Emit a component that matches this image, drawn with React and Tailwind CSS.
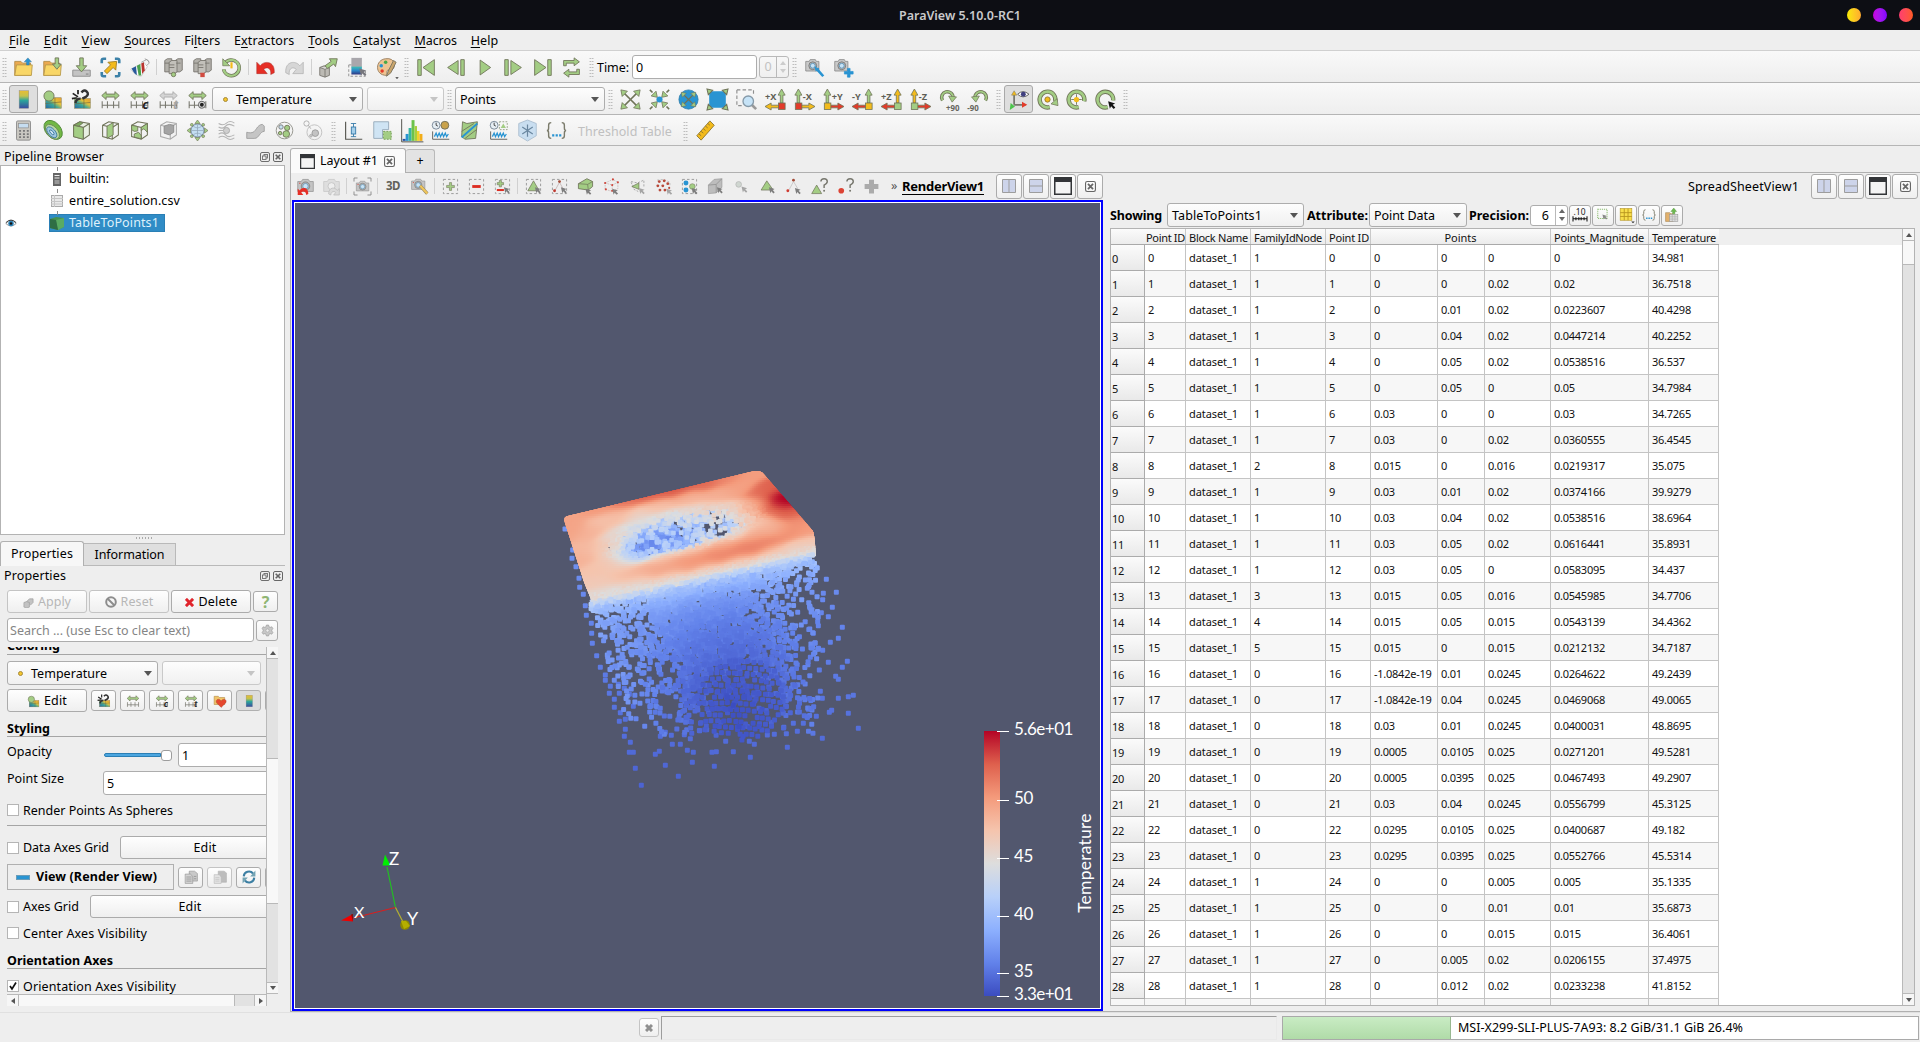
import React, { useLayoutEffect, useMemo, useRef } from "react";

/* Text fitted to a given width by letter spacing. */
function T({ w, className = "", children }) {
  const ref = useRef(null);
  useLayoutEffect(() => {
    const el = ref.current;
    if (!el || !w) return;
    el.style.letterSpacing = "0px";
    const natural = el.getBoundingClientRect().width;
    el.style.letterSpacing = (w - natural) / el.textContent.length + "px";
  }, [w]);
  return (
    <span ref={ref} className={"inline-block whitespace-pre flex-none " + className}>
      {children}
    </span>
  );
}

const G = "#a3cd84";
const GS = "#6f7358";
const B = "#2994d2";
const Y = "#f3bb1c";
const R = "#e23b2a";
const K = "#77776e";

function Svg({ s = 21, children }) {
  return (
    <svg width={s} height={s} viewBox="0 0 24 24" fill="none" className="block flex-none overflow-visible">
      {children}
    </svg>
  );
}

/* ---------- shared icon parts ---------- */
const MapSquare = ({ x = 5, y = 9, w = 16, h = 12 }) => (
  <g>
    <rect x={x} y={y} width={w} height={h} fill="url(#mapDiag)" stroke="#8b8050" strokeWidth=".6" />
    <path d={`M${x} ${y + h * 0.55}L${x + w} ${y + h * 0.4}M${x + w * 0.6} ${y}V${y + h}`} stroke="#6f6640" strokeWidth=".7" />
  </g>
);
const Range = ({ c = G, s = GS }) => (
  <g>
    <path d="M2 7.5L7 3v2.8h10V3l5 4.5-5 4.5V9.2H7V12z" fill={c} stroke={s} strokeWidth="1" />
    <path d="M2.500 14v8M8.500 14v8M15.500 14v8M21.500 14v8M2.500 18.500h19" stroke={K} strokeWidth="1.200" />
  </g>
);
const Cursor = ({ x = 14, y = 13, c = "#7d7d7d" }) => (
  <path d={`M${x} ${y}l8 2.500-2.800 1.500 3 3-1.800 1.800-3-3-1.400 2.800z`} fill={c} />
);
const Dash = ({ x = 2, y = 2, w = 20, h = 20, c = "#8f8f8f" }) => (
  <rect x={x} y={y} width={w} height={h} stroke={c} strokeWidth="1.200" strokeDasharray="3.500 3" />
);
const CubeFrame = ({ c = GS, f = "none" }) => (
  <path d="M3 6l7-4 11 2v13l-7 5-11-3zM3 6l11 2.500V22M14 8.500L21 4" stroke={c} fill={f} strokeWidth="1.200" />
);
const Camera = () => (
  <g>
    <path d="M2 5h4l1-2h6l1 2h3v11H2z" fill="#c9c9c9" stroke="#8d8d8d" />
    <circle cx="10" cy="10" r="4.500" fill="#b5b5b5" stroke="#777" />
    <circle cx="10" cy="10" r="2.800" fill="#c7e2f5" stroke="#5a94ba" />
  </g>
);
/* larger camera body used by the view toolbar */
const BigCamera = () => (
  <g>
    <path d="M1 5h5l2-3h8l2 3h5v14H1z" fill="#c4c4c4" stroke="#8f8f8f" />
    <circle cx="12" cy="11.500" r="6" fill="#b2b2b2" stroke="#777" />
    <circle cx="12" cy="11.500" r="3.800" fill="#c7e2f5" stroke="#5a94ba" />
    <circle cx="4" cy="7.500" r="1" fill="#d9534a" />
  </g>
);
const Servers = () => (
  <g fill="#b3b1ab" stroke="#77756e">
    <path d="M2 4l3-2h5v13l-3 2H2zM14 4l3-2h5v13l-3 2h-5z" />
    <path d="M7 6l3-2h6v13l-3 2H7z" fill="#c2c0ba" />
    <path d="M2 7h5M7 9h6M7 12h6M15 7h5" />
  </g>
);
const Plus = ({ cx, cy, r = 5, c = G, s = GS }) => (
  <path
    d={`M${cx - 1.5} ${cy - r}h3v${r - 1.5}h${r - 1.5}v3h-${r - 1.5}v${r - 1.5}h-3v-${r - 1.5}h-${r - 1.5}v-3h${r - 1.5}z`}
    fill={c}
    stroke={s}
    strokeWidth=".8"
  />
);
const Arrows4 = ({ tips = "out" }) =>
  [0, 90, 180, 270].map((a) => (
    <g key={a} transform={`rotate(${a} 12 12)`}>
      {tips === "out" ? (
        <path d="M12 12L5 5" stroke={GS} strokeWidth="1.800" />
      ) : (
        <path d="M1 1l3 3" stroke={GS} strokeWidth="1.800" />
      )}
      <path d={tips === "out" ? "M1 1l7.500 1.500-6 6z" : "M9.500 9.500L2.500 8 8 2.500z"} fill={G} stroke={GS} strokeWidth=".9" />
    </g>
  ));
const small = "font-['Noto_Sans'] font-bold";

const icons = {
  open: (<><path d="M2 5h7l2 2h9v14H2z" fill="#eba950" stroke="#b08a45" /><path d="M2 21l2-12h18l-1 12z" fill="#f8d667" stroke="#b7994a" /><path d="M17 1l4 4.500h-2.500V9h-3V5.500H13z" fill={B} stroke="#35769c" strokeWidth=".6" /></>),
  recent: (<><path d="M2 5h7l2 2h9v14H2z" fill="#eba950" stroke="#b08a45" /><path d="M2 21l2-12h18l-1 12z" fill="#f8d667" stroke="#b7994a" /><path d="M15 1h4v7h3l-5 6-5-6h3z" fill={G} stroke={GS} /></>),
  save: (<><path d="M2 15h20v7H2z" fill="#c3c3c3" stroke="#8b8b8b" /><path d="M10 1h4v9h4l-6 7-6-7h4z" fill={G} stroke={GS} /><path d="M17 19.500h3" stroke="#777" /></>),
  extract: (<><path d="M2 7V4q0-2 2-2h3M17 2h3q2 0 2 2v3M22 17v3q0 2-2 2h-3M7 22H4q-2 0-2-2v-3" stroke="#3c81a8" strokeWidth="3" /><path d="M5 16l7-7-3-3 10-1-1 10-3-3-7 7z" fill={Y} stroke="#9b7a23" /></>),
  flask: (<><path d="M17 6l4 5-7 11q-6 0-12-8z" fill="#fff" stroke="#c9c9c9" /><path d="M3 13l5-2.500 1 10q-3-1-6-7.500z" fill="#29599b" /><path d="M9 10l4-2 1 13h-3z" fill="#4aa04c" /><path d="M14 7.500l3-1.500 1 9-3 4.500z" fill="#b8332d" /><path d="M14 6l6-3q3 1 3 4l-3 3M18 2q4 1 5 4" stroke="#9b9b9b" /></>),
  connect: (<><Servers /><circle cx="12" cy="20" r="2.500" fill={G} stroke={GS} /></>),
  disconnect: (<><Servers /><rect x="9.500" y="18" width="5" height="5" fill="#d14b40" /></>),
  history: (<><path d="M4 8a9 9 0 1 1-1 6" stroke={GS} strokeWidth="4" /><path d="M4 8a9 9 0 1 1-1 6" stroke={G} strokeWidth="2.500" /><path d="M2 2v8h8z" fill={G} stroke={GS} strokeWidth=".8" /><path d="M12 6v7" stroke={Y} strokeWidth="2.500" /></>),
  undo: (<path d="M2 19V6l4 4c4-6 17-6 16 8l-4 2c1-8-5-9-8-6l4 5z" fill="#e62e25" stroke="#a82a25" strokeWidth=".6" />),
  redo: (<path d="M22 19V6l-4 4C14 4 1 4 2 18l4 2c-1-8 5-9 8-6l-4 5z" fill="#d6d6d6" stroke="#adadad" strokeWidth=".8" />),
  apply: (<><path d="M2 12l5-2 6 2v9l-5 2-6-2zM8 14v9M2 12l6 2 5-2" fill="#bcbab4" stroke="#77756e" /><path d="M8 10l7-5-2-3 9 0-2 9-2-3-7 5z" fill={G} stroke={GS} /></>),
  selcolor: (<><rect x="5" y="1" width="12" height="11" fill="#a9a7ac" /><rect x="5" y="11" width="12" height="9" fill="url(#mapV2)" /><path d="M2 9v13h19v-6M2 9h3" stroke="#888" strokeDasharray="3 2" /><Cursor x={14} y={13} c="#77777d" /></>),
  palette: (<><path d="M11 2c13-2 12 14 5 13-5-1-3 3-4 6C-2 21-1 3 11 2z" fill="#eec492" stroke="#93795b" /><circle cx="11" cy="6" r="2" fill="#48a949" /><circle cx="6" cy="10" r="2" fill={B} /><circle cx="7" cy="16" r="2" fill={R} /><path d="M20 4l-6 12-2 6 5-4 6-12z" fill="#c9a56c" stroke="#77715f" /><path d="M22 23h4l-2 2z" fill="#333" /></>),
  first: (<path d="M2 3h4v18H2zM21 3v18L8 12z" fill={G} stroke={GS} />),
  prev: (<path d="M18 3h4v18h-4zM15 4v16L3 12z" fill={G} stroke={GS} />),
  play: (<path d="M7 3.500v17L19 12z" fill={G} stroke={GS} />),
  next: (<path d="M2 3h4v18H2zM9 4v16l12-8z" fill={G} stroke={GS} />),
  last: (<path d="M18 3h4v18h-4zM3 3v18l13-9z" fill={G} stroke={GS} />),
  loop: (<path d="M3 10V4h12V1l6 4.500-6 4.500V7H6v3zM21 14v6H9v3l-6-4.500L9 14v3h9v-3z" fill={G} stroke={GS} />),
  camLink: (<><Camera /><path d="M14 13l8 9" stroke={B} strokeWidth="3" /><path d="M13 11l1 4 3-2" stroke={B} strokeWidth="2" /></>),
  camPlus: (<><Camera /><Plus cx={18} cy={18} r={5} c={B} s={B} /></>),
  bar: (<rect x="7" y="2" width="11" height="20" fill="url(#mapV)" stroke="#888" strokeWidth=".5" />),
  editmap: (<><MapSquare x={4} y={10} w={18} h={12} /><circle cx="8" cy="8" r="5.800" fill={G} stroke={GS} /></>),
  sepmap: (<><MapSquare x={4} y={11} w={18} h={11} /><path d="M8 1v5M2 5l6 4M1 11l6-1" stroke="#222" strokeWidth="2" /><path d="M12 4q3-4 6-1t-1 6l-4 2M5 16q1-5 6-5" stroke="#333" strokeWidth="2.800" /></>),
  range: (<Range />),
  rangeC: (<><Range /><text x="15" y="22.500" className={small} fontSize="14" fontStyle="italic" fill="#222">c</text></>),
  rangeT: (<><Range c="#d4d4d4" s="#aaa" /><text x="17" y="22.500" className={small} fontSize="14" fontStyle="italic" fill="#a5a5a5">t</text></>),
  rangeT2: (<><Range /><text x="17" y="22.500" className={small} fontSize="14" fontStyle="italic" fill="#333">t</text></>),
  rangeV: (<><Range /><circle cx="17" cy="18" r="4" fill="#ddd" stroke="#555" /><circle cx="17" cy="18" r="2.200" fill="#222" /></>),
  calc: (<><rect x="4" y="1" width="16" height="22" rx="1.500" fill="#c9c7c1" stroke="#888" /><rect x="6.500" y="4" width="11" height="5" fill="#c6ddf0" stroke="#888" strokeWidth=".7" /><path d="M7 12.500h11M7 16h11M7 19.500h11" stroke="#777" strokeWidth="2" strokeDasharray="2.200 2.200" /></>),
  contour: (<g transform="rotate(48 12 12)"><ellipse cx="12" cy="11" rx="12.500" ry="8.500" fill="#72b845" stroke="#4d8634" /><ellipse cx="13" cy="13" rx="10" ry="6" fill="#b9d7a2" stroke="#6a8a55" /><ellipse cx="13" cy="14" rx="7.500" ry="4" fill="#9fc6e0" stroke="#417b9f" /><ellipse cx="13" cy="14" rx="3.500" ry="1.500" fill="#d1e5f3" stroke="#37789f" /></g>),
  clip: (<><CubeFrame f="#e8efe2" /><path d="M3 6l11 2.500V22L3 19z" fill={G} stroke={GS} /><path d="M3 6l7-4 4 1-5 4z" fill="#7faa60" stroke={GS} /></>),
  slice: (<><CubeFrame /><path d="M8 7l7-4v14l-7 4z" fill={G} stroke={GS} /></>),
  threshold: (<><CubeFrame /><path d="M3 6l7 1.500v5L6 13l-3-2zM14 8.500L21 4v10l-4-4-3 2zM6 16l5-2 3 4v3.500l-8-2z" fill={G} stroke={GS} /></>),
  subset: (<><CubeFrame c="#aaa" /><path d="M7 7l6-2 5 1v8l-5 3-6-2z" fill="#a4a4a4" stroke="#888" /></>),
  glyph: (<><circle cx="12" cy="12" r="7.500" fill="#c4def1" stroke="#698199" /><path d="M5 12h14M12 5v14M7 7q5 4 10 0M7 17q5-4 10 0" stroke="#8fa5b7" strokeWidth=".8" /><g fill={G} stroke={GS} strokeWidth=".7"><path d="M12 0l3 4H9zM12 24l3-4H9zM0 12l4-3v6zM24 12l-4-3v6z" /><circle cx="5.500" cy="5.500" r="1.600" /><circle cx="18.500" cy="5.500" r="1.600" /><circle cx="5.500" cy="18.500" r="1.600" /><circle cx="18.500" cy="18.500" r="1.600" /></g></>),
  stream: (<><path d="M3 4q5 3 9-.500t9 0M3 8q5 3 8-1t10 0M3 20q5-3 9 .500t9 0M3 16q5-3 8 1t10 0M3 12h5" stroke="#b4b4b4" strokeWidth="1.200" /><circle cx="12" cy="12" r="3.500" fill="#cfcfcf" stroke="#a5a5a5" /></>),
  warp: (<path d="M2 14c7 2 9-1 11-4s4-5 7-5l2 2v6c-5 0-6 8-11 8H2z" fill="#c5c5c5" stroke="#9d9d9d" />),
  group: (<><circle cx="12" cy="12" r="9.500" stroke="#8c8c84" /><circle cx="8" cy="8" r="2.500" fill="#c7e0ef" stroke="#777" /><circle cx="15" cy="9" r="3" fill={G} stroke={GS} /><circle cx="14" cy="16" r="3.800" fill={G} stroke={GS} /><circle cx="7" cy="15" r="2" fill={G} stroke={GS} /></>),
  extractBlock: (<><circle cx="13" cy="14" r="8.500" stroke="#bdbdbd" /><circle cx="14" cy="15" r="3.800" fill="#c3c3c3" stroke="#999" /><circle cx="4" cy="4" r="3" stroke="#aaa" /><circle cx="9" cy="18" r="1.500" fill="#ccc" stroke="#aaa" /><path d="M6 6l3 4" stroke="#aaa" /></>),
  boxplot: (<><path d="M3 2v20h19" stroke="#55554f" strokeWidth="1.300" /><path d="M9 4h6M12 4v4M12 15v4M9 19h6" stroke="#3479a8" /><rect x="9.500" y="8" width="5" height="8" fill="#a6cfea" stroke="#3479a8" /></>),
  plotSel: (<><path d="M2 2h17v9h-7v10H2z" fill="#cfe4f4" stroke="#93a7b7" /><rect x="13" y="13" width="9" height="9" fill={G} stroke="#6f9a50" strokeDasharray="2 1.500" /></>),
  hist: (<g transform="translate(-1.500 -1) scale(1.130)"><path d="M2 0v23h22" stroke="#55554f" /><path d="M3 20h3v2H3z" fill="#284fa2" /><path d="M6 15h3v7H6z" fill={B} /><path d="M9 9h3v13H9z" fill="#37b5a3" /><path d="M12 1h3v21h-3z" fill="#6cc24a" /><path d="M15 7h2.500v15H15z" fill="#a7cf3e" /><path d="M17.500 12H20v10h-2.500z" fill="#f2d22c" /><path d="M20 15h3v7h-3z" fill="#f2ad19" /></g>),
  plotTime: (<><circle cx="7" cy="6" r="4.500" fill="#e6eef4" stroke="#708090" /><path d="M7 3v3l2 1" stroke="#333" /><circle cx="17" cy="6" r="4.500" fill="#c9a24b" stroke="#6b6b5b" /><path d="M3 13v9h19" stroke="#55554f" /><path d="M5 19l2-4 1.500 4 2-4 1.500 4 2-4 1.500 4 2-4 1.500 4 2-3" stroke={B} strokeWidth="1.400" /></>),
  plotLine: (<><path d="M4 2l5 2 12-2-2 19-12 1-4-3z" fill={G} stroke={GS} /><path d="M3 20L21 4" stroke={B} strokeWidth="2" /><path d="M3 13l14-9M7 21l13-10" stroke={GS} /></>),
  plotTime2: (<><circle cx="7" cy="6" r="4.500" fill="#e6eef4" stroke="#708090" /><path d="M7 3v3l2 1" stroke="#333" /><rect x="13" y="2" width="9" height="9" stroke="#8f9a80" strokeDasharray="2 1.500" /><path d="M17.500 4l3 5h-6z" fill={G} /><path d="M3 13v9h19" stroke="#55554f" /><path d="M5 19l2-4 1.500 4 2-4 1.500 4 2-4 1.500 4 2-4 1.500 4 2-3" stroke={B} strokeWidth="1.400" /></>),
  probe: (<><path d="M12 0l10 4v14l-10 6L2 18V4z" fill="#c9def0" stroke="#a9bdcf" /><path d="M12 5v14M6 8l12 8M18 8L6 16" stroke="#6a87a0" strokeWidth="1.400" /></>),
  braces: (<><path d="M6 3q-3 0-3 3v3q0 3-2 3 2 0 2 3v3q0 3 3 3M18 3q3 0 3 3v3q0 3 2 3-2 0-2 3v3q0 3-3 3" stroke="#7b7b6b" strokeWidth="1.600" /><path d="M7 17.500h11" stroke={B} strokeWidth="2.500" strokeDasharray="2.500 1.500" /></>),
  ruler: (<><path d="M17 1l5 5L7 23l-5-5z" fill={Y} stroke="#8a7430" /><path d="M14.500 4l2.500 2M12 7l2.500 2M9.500 10l2.500 2M7 13L9.500 15M4.500 16L7 18" stroke="#8a7430" /></>),
  reset: (<Arrows4 />),
  zoomData: (<><Arrows4 tips="in" /><circle cx="12" cy="12" r="3.500" fill={B} /></>),
  resetClose: (<><circle cx="12" cy="12" r="11" fill={B} stroke="#2b78a5" strokeWidth=".8" /><g transform="translate(3 3) scale(.75)"><Arrows4 /></g></>),
  zoomClose: (<><rect x="2.500" y="2.500" width="19" height="19" rx="3" fill={B} /><path d="M0 0l6.500 1.500-5 5zM24 0l-6.500 1.500 5 5zM0 24l6.500-1.500-5-5zM24 24l-6.500-1.500 5-5z" fill={G} stroke={GS} strokeWidth="1.200" /></>),
  zoomBox: (<><path d="M1 1h19v7M1 1v18h6" stroke="#8f8f8f" strokeWidth="1.300" strokeDasharray="4 2.500" /><path d="M18 18l5 5" stroke="#999" strokeWidth="3" /><circle cx="14" cy="14" r="6" fill="#c6e3f7" stroke="#8599a8" strokeWidth="1.500" /></>),
  rotP: (<><path d="M4 13a6.500 6.500 0 1 1 12-3" stroke={GS} strokeWidth="4" /><path d="M4 13a6.500 6.500 0 1 1 12-3" stroke={G} strokeWidth="2" /><path d="M11 8l9 1-5 6z" fill={G} stroke={GS} strokeWidth=".8" /><text x="8" y="25" className={small} fontSize="9" fill="#66665e">+90</text></>),
  rotM: (<><path d="M20 13a6.500 6.500 0 1 0-12-3" stroke={GS} strokeWidth="4" /><path d="M20 13a6.500 6.500 0 1 0-12-3" stroke={G} strokeWidth="2" /><path d="M13 8l-9 1 5 6z" fill={G} stroke={GS} strokeWidth=".8" /><text x="-1" y="25" className={small} fontSize="9" fill="#66665e">-90</text></>),
  showAxes: (<><path d="M7 18V5M7 18h13" stroke={K} strokeWidth="2" /><path d="M7 2l3 5H4z" fill={Y} stroke={K} strokeWidth=".6" /><path d="M22 18l-6-3.500v7z" fill={R} /><path d="M2 24l1-8 5 4z" fill="#4bc44b" /><path d="M11 6q6-6 13 0-7 6-13 0z" fill="#fff" stroke="#555" /><circle cx="17.500" cy="6" r="2.800" fill="#3f3f7f" /></>),
  cor1: (<><path d="M14.500 20.700A9 9 0 1 1 20.800 14" stroke={GS} strokeWidth="5" /><path d="M14.500 20.700A9 9 0 1 1 20.800 14" stroke={G} strokeWidth="3" /><path d="M16 17l7-6 1 8z" fill={G} stroke={GS} strokeWidth=".8" /><circle cx="12" cy="12" r="3" fill={Y} stroke="#93752a" /></>),
  cor2: (<><path d="M14.500 20.700A9 9 0 1 1 20.800 14" stroke={GS} strokeWidth="5" /><path d="M14.500 20.700A9 9 0 1 1 20.800 14" stroke={G} strokeWidth="3" /><path d="M12 6v12M6 12h12" stroke={GS} /><circle cx="12" cy="12" r="3" fill={Y} /></>),
  cor3: (<><path d="M14.500 20.700A9 9 0 1 1 20.800 13" stroke={GS} strokeWidth="5" /><path d="M14.500 20.700A9 9 0 1 1 20.800 13" stroke={G} strokeWidth="3" /><Cursor x={15} y={14} c="#111" /></>),
  camUndo: (<><BigCamera /><path d="M1 24v-9l3 2.500c3-5 12-5 12 5l-3 1.500c0-5-5-6-7-3.500L9 24z" fill="#e62e25" /></>),
  camRedo: (<g opacity=".6"><path d="M1 5h5l2-3h8l2 3h5v14H1z" fill="#d5d5d5" stroke="#a9a9a9" /><circle cx="12" cy="11.500" r="5" fill="#eee" stroke="#999" /><path d="M23 24v-9l-3 2.500c-3-5-12-5-12 5l3 1.500c0-5 5-6 7-3.500L15 24z" fill="#d0d0d0" stroke="#999" /></g>),
  capture: (<><path d="M0 5V0h5M19 0h5v5M24 19v5h-5M5 24H0v-5" stroke="#8a8a8a" strokeWidth="1.300" /><g transform="translate(2.500 3) scale(.8)"><BigCamera /></g></>),
  adjust: (<><g transform="scale(.85)"><BigCamera /></g><path d="M13 11l10 11" stroke="#92825c" strokeWidth="4.500" /><path d="M13 11l10 11" stroke="#efc65b" strokeWidth="3" /></>),
  selAdd: (<><Dash /><Plus cx={12} cy={12} r={5.500} /></>),
  selSub: (<><Dash /><rect x="6" y="10" width="12" height="4" fill="#dd2d22" /></>),
  selTog: (<><Dash c="#9a9a9a" /><Plus cx={9} cy={8} r={4.500} /><path d="M4 17h10" stroke="#dd2d22" strokeWidth="2.800" /><Cursor /></>),
  selCells: (<><Dash /><path d="M12 4l8 14H4z" fill={G} stroke={GS} /><Cursor /></>),
  selPts: (<><Dash /><path d="M12 6l6 11M12 6L6 17" stroke="#b9a9a9" /><circle cx="12" cy="5" r="2" fill="#a34a35" /><circle cx="5" cy="18" r="2" fill="#c03a30" /><Cursor /></>),
  frCells: (<><path d="M2 8l12-7 8 4v7l-6 5-14-2z" fill={G} stroke={GS} strokeWidth="1.200" /><path d="M2 8l13 1 7-4M15 9l1 8" stroke={GS} /><Cursor x={12} y={15} /></>),
  frPts: (<><path d="M3 7l11-5 7 4v9l-8 4-10-3zM3 7l10 3 8-4M13 10v9" stroke="#b9a9a9" strokeDasharray="2 1.500" /><g fill="#d0473c"><circle cx="3" cy="7" r="1.500" /><circle cx="14" cy="2" r="1.500" /><circle cx="21" cy="6" r="1.500" /><circle cx="13" cy="10" r="1.500" /><circle cx="13" cy="18" r="1.500" /><circle cx="4" cy="16" r="1.500" /></g><Cursor x={13} y={15} /></>),
  polyCells: (<><path d="M3 5l9 2 9-4 0 9M3 6l4 10 6 3" stroke="#8f8f8f" strokeDasharray="3 2" /><path d="M14 7v9L4 12z" fill={G} stroke={GS} /><Cursor x={14} y={14} c="#a5a5a5" /></>),
  polyPts: (<><path d="M3 3l9-1 9 4v6" stroke="#aaa" strokeDasharray="3 2" /><g fill="#b8493a"><circle cx="6" cy="5" r="2" /><circle cx="13" cy="4" r="2" /><circle cx="18" cy="8" r="2" /><circle cx="4" cy="11" r="2" /><circle cx="11" cy="11" r="2" /><circle cx="7" cy="17" r="2" /><circle cx="14" cy="17" r="2" /><circle cx="20" cy="14" r="1.500" /></g><Cursor x={16} y={15} c="#a5a5a5" /></>),
  blocks: (<><Dash /><circle cx="7" cy="7" r="3.500" fill={B} /><circle cx="7" cy="17" r="3.500" fill={B} /><circle cx="16" cy="12" r="4" fill={G} stroke={GS} strokeWidth=".7" /><Cursor x={15} y={14} /></>),
  blockF: (<><path d="M2 10l8-8 11-1v12l-8 8-11 1z" fill="#bdbdbd" stroke="#999" /><path d="M2 10l11-1 8-8M13 9v12" stroke="#8c8c8c" /><Cursor /></>),
  hoverP: (<><circle cx="8" cy="9" r="4" fill="#cfd6d0" stroke="#b5b5b5" /><Cursor x={12} y={12} c="#a5a5a5" /></>),
  hoverC: (<><path d="M11 4l9 13H3z" fill={G} stroke={GS} /><Cursor /></>),
  hoverT: (<><path d="M12 5L5 18M12 5l6 10" stroke="#bbb" /><circle cx="12" cy="3" r="2" fill="#a34a35" /><circle cx="4" cy="18" r="2" fill="#d03a30" /><Cursor x={14} y={14} /></>),
  askC: (<><path d="M8 10l7 12H1z" fill={G} stroke={GS} /><path d="M14 5q0-4 4.500-4t4.500 4q0 3-4.500 5v4" stroke={K} strokeWidth="2" /><circle cx="18.500" cy="18" r="1.400" fill={K} /></>),
  askP: (<><circle cx="6" cy="18" r="4" fill="#dc4334" /><path d="M14 5q0-4 4.500-4t4.500 4q0 3-4.500 5v4" stroke={K} strokeWidth="2" /><circle cx="18.500" cy="18" r="1.400" fill={K} /></>),
  plusGrey: (<path d="M8 1h8v7h7v8h-7v7H8v-7H1V8h7z" fill="#ababab" />),
  fav: (<><path d="M2 4h7l2 2h9v12H2z" fill="#f1c469" stroke="#b08a45" /><path d="M14 23l-8-8q-2-5 3-6 3.500 0 5 3 1.500-3 5-3 5 1 3 6z" fill="#e5482f" stroke="#9b3a2b" strokeWidth=".6" /></>),
  gear: (<><path d="M10 2h4l.600 3 2.400 1.200 3-1 2 3.500-2.200 2.300v2l2.200 2.300-2 3.500-3-1-2.400 1.200-.600 3h-4l-.600-3L7 17.800l-3 1-2-3.500L4.200 13v-2L2 8.700l2-3.500 3 1 2.400-1.200z" fill="#c7c7c7" stroke="#9d9d9d" strokeWidth="1.300" /><circle cx="12" cy="12" r="3" fill="#eee" stroke="#9d9d9d" /></>),
  copy: (<><path d="M9 2h9l5 4v13H9z" fill="#c9c9c9" stroke="#8d8d8d" /><path d="M2 7h9l4 4v12H2z" fill="#d3d3d3" stroke="#8d8d8d" /><path d="M4 12h9M4 15.500h9M4 19h9M17 11h4M17 15h4" stroke="#8f8f8f" strokeWidth="1.300" /></>),
  paste: (<><path d="M9 2h10l4 3v16H9z" fill="#bdbdbd" stroke="#b0b0b0" /><path d="M2 8h9l3 4v11H2z" fill="#e3e3e3" stroke="#b5b5b5" /><path d="M4 13h7M4 16h7M4 19h7" stroke="#bbb" /></>),
  refresh: (<><path d="M3 11A9 9 0 0 1 19 6M21 13A9 9 0 0 1 5 18" stroke="#3c7fa3" strokeWidth="3.500" /><path d="M23 1v10h-9zM1 23V13h9z" fill="#74a4b4" /></>),
  prec: (<><text x="1" y="12" className="font-['Noto_Sans']" fontSize="14.500" fill="#222">.10</text><path d="M0 14v9M24 14v9M0 18.500h24M5 16v5M10 16v5M14 16v5M19 16v5" stroke="#111" strokeWidth="1.800" /></>),
  selOnly: (<><rect x="3" y="2" width="16" height="16" stroke="#8cbc70" strokeWidth="1.800" strokeDasharray="2 1.500" /><Cursor x={11} y={11} c="#888" /></>),
  gridY: (<><rect x="2" y="1" width="20" height="20" fill="#f8de4b" stroke="#b5941f" /><path d="M9 1v20M15.500 1v20M2 8h20M2 14.500h20" stroke="#b5941f" strokeWidth="1.500" /><path d="M21 23h6l-3 3z" fill="#333" /></>),
  exportS: (<><path d="M1 8h7l2 2h4v13H1z" fill="#e3b16d" stroke="#a7834f" /><rect x="8" y="11" width="14" height="12" fill="#ddd" stroke="#999" /><path d="M8 15h14M8 19h14M12.500 11v12M17 11v12" stroke="#aaa" /><path d="M13 10V6h-3l5-6 5 6h-3v4z" fill="#6cba4f" stroke="#4d8838" strokeWidth=".6" /></>),
};
const Ic = ({ n, s }) => <Svg s={s}>{icons[n]}</Svg>;

/* Axis-direction icon: an up arrow and a side arrow leaving one cube. */
function AxisIcon({ label, left, up, side, cube }) {
  const x = left ? 19 : 5;
  return (
    <Svg>
      <path d={`M${x - 1.5} 16V7h-2.500l4-7 4 7h-2.500v9z`} fill={up} stroke={GS} strokeWidth=".9" />
      <path
        d={left ? "M16 18.500H7V16l-7 4 7 4v-2.500h9z" : "M8 18.500h9V16l7 4-7 4v-2.500H8z"}
        fill={side}
        stroke={GS}
        strokeWidth=".9"
      />
      <rect x={x - 3.5} y="16" width="7.500" height="7.500" fill={cube} stroke={GS} strokeWidth=".9" />
      <text x={left ? 0 : 10} y="12" className={small} fontSize="10.500" fill="#5e5e55">{label}</text>
    </Svg>
  );
}

const Handle = ({ w = "w-[11px]" }) => (
  <div className={"flex h-full flex-none items-center justify-center " + w}>
    <div className="h-[20px] w-[5px] bg-[radial-gradient(circle,#b0b0b0_0.7px,transparent_0.9px)] bg-[size:2.500px_3px]" />
  </div>
);
const Sep = () => (
  <div className="flex h-full w-[5px] flex-none items-center justify-center">
    <div className="h-[16px] w-px bg-[#d0d0d0]" />
  </div>
);
const Cell = ({ on, children }) => (
  <div
    className={
      "flex w-[29px] flex-none items-center justify-center " +
      (on ? "h-[28px] rounded-[3px] border border-[#a9a9a9] bg-[#dedede]" : "h-full")
    }
  >
    {children}
  </div>
);
const Cells = ({ list }) =>
  list.map((n, i) => (n === "|" ? <Sep key={i} /> : <Cell key={i}><Ic n={n} /></Cell>));

const Caret = ({ off }) => (
  <span className={"h-0 w-0 border-x-[4px] border-t-[5px] border-x-transparent " + (off ? "border-t-[#c5c5c5]" : "border-t-[#555]")} />
);
const Combo = ({ className, off, children }) => (
  <div
    className={
      "flex h-[24px] flex-none items-center justify-between rounded-[3px] border bg-gradient-to-b from-[#fdfdfd] to-[#f0f0f0] pr-[5px] " +
      (off ? "border-[#c9c9c9] " : "border-[#adadad] ") + className
    }
  >
    <div className="flex items-center pt-px">{children}</div>
    <Caret off={off} />
  </div>
);
const Btn = ({ className = "", grow, off, on, children }) => (
  <div
    className={
      "flex items-center justify-center rounded-[3px] border " + (grow ? "flex-1 " : "flex-none ") +
      (on ? "border-[#b0b0b0] bg-[#dcdcdc] " : "bg-gradient-to-b from-[#fefefe] to-[#efefef] ") +
      (off ? "border-[#c4c4c4] text-[#b7b7b7] " : "border-[#ababab] ") + className
    }
  >
    {children}
  </div>
);
const Dot = () => <span className="mr-[8px] h-[5px] w-[5px] rounded-full border border-[#a58a3b] bg-[#f5c52c]" />;

const FloatBtns = () => (
  <div className="flex gap-[3px] pr-[5px]">
    <svg width="10" height="10" viewBox="0 0 10 10" fill="none" stroke="#6e6e6e">
      <rect x=".5" y=".5" width="9" height="9" rx="1.500" />
      <rect x="4" y="2.500" width="3.500" height="3.500" strokeWidth=".9" />
      <rect x="2.500" y="4" width="3.500" height="3.500" fill="#eee" strokeWidth=".9" />
    </svg>
    <CloseBox />
  </div>
);
const CloseBox = ({ s = 10 }) => (
  <svg width={s} height={s} viewBox="0 0 10 10" fill="none" stroke="#666">
    <rect x=".5" y=".5" width="9" height="9" rx="1.500" />
    <path d="M2.700 2.700l4.600 4.600M7.300 2.700L2.700 7.300" strokeWidth="1.600" />
  </svg>
);

/* ---------- menu and toolbars ---------- */
const menus = [
  ["", "F", "ile", 21], ["", "E", "dit", 24], ["", "V", "iew", 29], ["", "S", "ources", 46], ["Fi", "l", "ters", 36],
  ["E", "x", "tractors", 60.5], ["", "T", "ools", 31], ["", "C", "atalyst", 47.5], ["", "M", "acros", 42.5], ["", "H", "elp", 27.5],
];

function Toolbars() {
  const bar = "flex flex-none items-center border-b border-[#b5b5b5] bg-gradient-to-b from-[#f9f9f9] to-[#eeeeee] pt-px ";
  return (
    <>
      <div className="flex h-[21px] flex-none items-center gap-[13.800px] border-b border-[#d0d0d0] pl-[9px] pt-px">
        {menus.map(([a, u, b, w]) => (
          <T key={u} w={w}>{a}<span className="underline decoration-1 underline-offset-2">{u}</span>{b}</T>
        ))}
      </div>
      <div className={bar + "h-[32px]"}>
        <Handle w="w-[9px]" />
        <Cells list={["open", "recent", "save", "extract", "flask", "|", "connect", "disconnect", "history", "|", "undo", "redo", "|", "apply", "selcolor", "palette"]} />
        <Handle />
        <Cells list={["first", "prev", "play", "next", "last", "loop"]} />
        <Handle />
        <T w={32} className="pt-px">Time:</T>
        <div className="ml-[3px] flex h-[24px] w-[125px] items-center rounded-[3px] border border-[#adadad] bg-white pl-[3px] pt-px">0</div>
        <div className="ml-[2px] flex h-[22px] w-[30px] items-center rounded-[3px] border border-[#b9b9b9] text-[#c2c2c2]">
          <span className="flex h-full w-[17px] items-center justify-center border-r border-[#b9b9b9]">0</span>
          <Spin off />
        </div>
        <Handle />
        <Cells list={["camLink", "camPlus"]} />
      </div>
      <div className={bar + "h-[32px]"}>
        <Handle w="w-[9px]" />
        <Cell on><Ic n="bar" /></Cell>
        <Cells list={["editmap", "sepmap", "range", "rangeC", "rangeT", "rangeV"]} />
        <Combo className="w-[151px] pl-[10px]"><Dot /><T w={76}>Temperature</T></Combo>
        <Combo off className="ml-[4px] w-[77px]" />
        <Handle />
        <Combo className="w-[150px] pl-[4px]"><T w={36}>Points</T></Combo>
        <Handle />
        <Cells list={["reset", "zoomData", "resetClose", "zoomClose", "zoomBox"]} />
        <Cell><AxisIcon label="+X" left up={G} side={Y} cube={R} /></Cell>
        <Cell><AxisIcon label="-X" up={G} side={Y} cube={R} /></Cell>
        <Cell><AxisIcon label="+Y" up={G} side={R} cube={Y} /></Cell>
        <Cell><AxisIcon label="-Y" left up={G} side={R} cube={Y} /></Cell>
        <Cell><AxisIcon label="+Z" left up={Y} side={R} cube={G} /></Cell>
        <Cell><AxisIcon label="-Z" up={Y} side={R} cube={G} /></Cell>
        <Cells list={["rotP", "rotM"]} />
        <Handle />
        <Cell on><Ic n="showAxes" /></Cell>
        <Cells list={["cor1", "cor2", "cor3"]} />
        <Handle />
      </div>
      <div className={bar + "h-[31px]"}>
        <Handle w="w-[9px]" />
        <Cells list={["calc", "contour", "clip", "slice", "threshold", "subset", "glyph", "stream", "warp", "group", "extractBlock"]} />
        <Handle />
        <Cells list={["boxplot", "plotSel", "hist", "plotTime", "plotLine", "plotTime2", "probe", "braces"]} />
        <T w={94} className="ml-[7px] mr-[8px] pt-[2px] text-[#c0c0c0]">Threshold Table</T>
        <Handle />
        <Cells list={["ruler"]} />
      </div>
    </>
  );
}

const Spin = ({ off }) => (
  <span className="flex flex-1 flex-col items-center gap-[4px]">
    <span className={"h-0 w-0 border-x-[3px] border-b-[4px] border-x-transparent " + (off ? "border-b-[#ccc]" : "border-b-[#666]")} />
    <span className={"h-0 w-0 border-x-[3px] border-t-[4px] border-x-transparent " + (off ? "border-t-[#ccc]" : "border-t-[#666]")} />
  </span>
);

/* ---------- left dock ---------- */
const Check = ({ on }) => (
  <span className="flex h-[12px] w-[12px] flex-none items-center justify-center border border-[#b5b5b5] bg-white">
    {on && (
      <svg width="10" height="10" viewBox="0 0 10 10" fill="none" stroke="#111" strokeWidth="1.700">
        <path d="M2 5l2 3L8 1.500" />
      </svg>
    )}
  </span>
);
const SmallBtn = ({ n, on, off }) => (
  <Btn on={on} off={off} className="h-[21px] w-[25px]"><Ic n={n} s={14} /></Btn>
);
const SbArrow = ({ dir }) => (
  <svg width="10" height="10" viewBox="0 0 10 10" fill="#555">
    <path d={{ up: "M2 7h6L5 3z", down: "M2 3h6L5 7z", left: "M7 2v6L3 5z", right: "M3 2v6l4-3z" }[dir]} />
  </svg>
);
const SbBox = ({ dir, className }) => (
  <div className={"flex flex-none items-center justify-center border-[#b9b9b9] bg-[#f6f6f6] " + className}><SbArrow dir={dir} /></div>
);

function TreeRow({ icon, w, sel, eye, children }) {
  return (
    <div className="flex h-[22px] items-center">
      <div className="flex w-[48px] items-center pl-[4px]">
        {eye && (
          <svg width="12" height="9" viewBox="0 0 14 10">
            <path d="M1 5q6-7 12 0-6 6-12 0z" fill="#fff" stroke="#8a8a8a" />
            <circle cx="7" cy="5" r="3.200" fill="#2c83b8" />
            <circle cx="7" cy="5" r="1.500" fill="#111" />
            <path d="M1 4q6-6 12 0" stroke="#222" fill="none" />
          </svg>
        )}
      </div>
      <div className={"flex h-[18px] items-center pr-[5px] " + (sel ? "border border-[#2a7fb5] bg-[#308cc6] text-[#dff1fb]" : "border border-transparent")}>
        <span className="relative mr-[5px] flex w-[14px] justify-center">
          <span className="absolute -top-[6px] left-[7px] h-[4px] w-px bg-[#8a8a8a]" />
          {icon}
        </span>
        <T w={w}>{children}</T>
      </div>
    </div>
  );
}

function PipelineBrowser() {
  return (
    <>
      <div className="flex h-[19px] flex-none items-center justify-between pl-[4px] pt-[2px]">
        <T w={100}>Pipeline Browser</T>
        <FloatBtns />
      </div>
      <div className="h-[370px] w-[285px] flex-none border border-[#b3b3b3] bg-white pt-[2px]">
        <TreeRow w={40} icon={<svg width="8" height="13" viewBox="0 0 8 13"><rect width="8" height="13" fill="#666" /><path d="M1.500 2.500h5M1.500 5h5" stroke="#eee" /><path d="M1.500 7v4h5V7z" fill="#999" /></svg>}>builtin:</TreeRow>
        <TreeRow w={111} icon={<svg width="12" height="12" viewBox="0 0 12 12"><rect x=".5" y=".5" width="11" height="11" fill="#e9e9e9" stroke="#aaa" /><path d="M3.500 0v12M0 3.500h12M0 6.500h12M0 9h12" stroke="#c6c6c6" /></svg>}>entire_solution.csv</TreeRow>
        <TreeRow w={90} sel eye icon={<svg width="14" height="13" viewBox="0 0 14 13"><path d="M0 2l6-2 8 1v9l-6 3-8-2z" fill="#469253" /><path d="M6 3l8-2v9l-6 3z" fill="#5aab62" /><path d="M0 2l6 1 2 10-8-2z" fill="#2f6e44" /></svg>}>TableToPoints1</TreeRow>
      </div>
    </>
  );
}

function Properties() {
  return (
    <>
      <div className="flex h-[6px] flex-none items-center justify-center pr-[2px]">
        <div className="h-[2px] w-[17px] bg-[radial-gradient(circle,#aaa_0.7px,transparent_0.9px)] bg-[size:3px_2px]" />
      </div>
      <div className="flex h-[25px] w-[285px] flex-none items-end border-b border-[#b9b9b9]">
        <div className="-mb-px flex h-[25px] w-[84px] items-center justify-center rounded-t-[3px] border border-b-0 border-[#b0b0b0] bg-[#f7f7f7]"><T w={62}>Properties</T></div>
        <div className="flex h-[22px] w-[92px] items-center justify-center border border-b-0 border-l-0 border-[#b9b9b9] bg-[#dfdfdf]"><T w={70}>Information</T></div>
      </div>
      <div className="flex h-[19px] flex-none items-center justify-between pl-[4px]">
        <T w={62}>Properties</T>
        <FloatBtns />
      </div>
      <div className="mt-[5px] flex flex-none items-center gap-[2px] pl-[7px]">
        <Btn off className="h-[23px] w-[80px] gap-[4px] pt-px"><svg width="11" height="11" viewBox="0 0 12 12" fill="#c3c3c3" stroke="#999" strokeWidth=".7"><path d="M1 6l3-1 3 1v5l-3 1-3-1zM4 5l3-3h4v4L8 9" /></svg><T w={33}>Apply</T></Btn>
        <Btn off className="h-[23px] w-[80px] gap-[4px] pt-px"><svg width="12" height="12" viewBox="0 0 12 12" fill="none" stroke="#8d8d8d" strokeWidth="2"><circle cx="6" cy="6" r="4.800" /><path d="M2.500 2.500l7 7" /></svg><T w={33}>Reset</T></Btn>
        <Btn className="h-[23px] w-[80px] gap-[5px] pt-px"><svg width="9" height="9" viewBox="0 0 10 10" stroke="#e0242c" strokeWidth="3.300"><path d="M1 1l8 8M9 1L1 9" /></svg><T w={39}>Delete</T></Btn>
        <Btn className="h-[21px] w-[25px] text-[16px] font-bold text-[#8fb573]">?</Btn>
      </div>
      <div className="mt-[5px] flex flex-none items-center gap-[2px] pl-[7px]">
        <div className="flex h-[24px] w-[247px] items-center rounded-[3px] border border-[#adadad] bg-white pl-[2px] pt-px text-[#858585]"><T w={180}>Search ... (use Esc to clear text)</T></div>
        <Btn className="h-[21px] w-[22px]"><Ic n="gear" s={13} /></Btn>
      </div>
      <div className="ml-[7px] mt-[5px] flex h-[347px] w-[271px] flex-none">
        <div className="h-full w-[259px] flex-none overflow-hidden">
          <div className="w-[283px]">
            <div className="flex h-[8px] items-end overflow-hidden border-b border-[#a5a5a5] font-bold leading-[18px]"><T w={53} className="-mb-px">Coloring</T></div>
            <div className="mt-[6px] flex gap-[4px]">
              <Combo className="w-[151px] pl-[10px]"><Dot /><T w={76}>Temperature</T></Combo>
              <Combo off className="w-[99px]" />
            </div>
            <div className="mt-[4px] flex items-center gap-[4px]">
              <Btn className="h-[23px] w-[80px] gap-[4px] pt-px"><Ic n="editmap" s={13} /><T w={23}>Edit</T></Btn>
              <SmallBtn n="sepmap" /><SmallBtn n="range" /><SmallBtn n="rangeC" /><SmallBtn n="rangeT2" /><SmallBtn n="fav" /><SmallBtn n="bar" on /><SmallBtn n="bar" />
            </div>
            <div className="flex h-[25px] items-end border-b border-[#a5a5a5] font-bold"><T w={43} className="-mb-px">Styling</T></div>
            <div className="mt-[6px] flex items-center">
              <T w={45} className="-mt-[6px]">Opacity</T>
              <div className="ml-[52px] flex w-[68px] items-center">
                <div className="h-[4px] w-[57px] rounded-l border border-[#2b7fb5] bg-[#4ba6e0]" />
                <div className="h-[11px] w-[11px] rounded-[3px] border border-[#9d9d9d] bg-white" />
              </div>
              <div className="ml-[6px] flex h-[24px] flex-1 items-center rounded-[3px] border border-[#adadad] bg-white pl-[3px] pt-px">1</div>
            </div>
            <div className="mt-[4px] flex items-center">
              <T w={57} className="-mt-[8px]">Point Size</T>
              <div className="ml-[39px] flex h-[24px] flex-1 items-center rounded-[3px] border border-[#adadad] bg-white pl-[3px] pt-px">5</div>
            </div>
            <div className="mt-[3px] flex h-[24px] items-center gap-[4px]"><Check /><T w={150} className="pt-px">Render Points As Spheres</T></div>
            <div className="mt-[3px] h-px bg-[#a5a5a5]" />
            <div className="mt-[10px] flex items-center gap-[4px]">
              <Check /><T w={86}>Data Axes Grid</T>
              <Btn grow className="ml-[7px] h-[23px] pt-px"><T w={23}>Edit</T></Btn>
            </div>
            <div className="mt-[5px] flex items-center gap-[4px]">
              <div className="flex h-[26px] w-[167px] items-center border border-[#b0b0b0] pl-[8px] font-bold">
                <span className="mr-[6px] h-[5px] w-[14px] border border-[#6a9cb8] bg-[#2994d2]" /><T w={121}>View (Render View)</T>
              </div>
              <SmallBtn n="copy" /><SmallBtn n="paste" off /><SmallBtn n="refresh" /><SmallBtn n="copy" />
            </div>
            <div className="mt-[5px] flex items-center gap-[4px]">
              <Check /><T w={56}>Axes Grid</T>
              <Btn grow className="ml-[7px] h-[23px] pt-px"><T w={23}>Edit</T></Btn>
            </div>
            <div className="mt-[3px] flex h-[24px] items-center gap-[4px]"><Check /><T w={124} className="pt-px">Center Axes Visibility</T></div>
            <div className="flex h-[24px] items-end border-b border-[#a5a5a5] font-bold"><T w={106} className="-mb-px">Orientation Axes</T></div>
            <div className="mt-[5px] flex h-[24px] items-center gap-[4px]"><Check on /><T w={153} className="pt-px">Orientation Axes Visibility</T></div>
          </div>
        </div>
        <div className="flex w-[12px] flex-col border-l border-[#b9b9b9] bg-[#e2e2e2]">
          <SbBox dir="up" className="h-[12px] border-b" />
          <div className="mt-[99px] h-[146px] border-y border-[#b9b9b9] bg-[#f8f8f8]" />
          <div className="flex-1" />
          <SbBox dir="down" className="h-[12px] border-y" />
        </div>
      </div>
      <div className="ml-[7px] flex h-[12px] w-[260px] flex-none border-r border-t border-[#b9b9b9] bg-[#e2e2e2]">
        <SbBox dir="left" className="w-[12px] border-r" />
        <div className="w-[216px] border-r border-[#b9b9b9] bg-[#f8f8f8]" />
        <div className="flex-1" />
        <SbBox dir="right" className="w-[12px] border-l" />
      </div>
    </>
  );
}

/* ---------- point cloud ---------- */
const ramp = [
  [59, 76, 192], [98, 130, 234], [141, 176, 254], [184, 208, 249], [221, 221, 221],
  [245, 196, 173], [244, 154, 123], [222, 96, 77], [180, 4, 38],
];
function color(v) {
  const t = Math.max(0, Math.min(0.9999, v)) * 8;
  const i = Math.floor(t);
  const f = t - i;
  const c = [0, 1, 2].map((k) => Math.round(ramp[i][k] + (ramp[i + 1][k] - ramp[i][k]) * f));
  return `rgb(${c.join(",")})`;
}
const samples = [
  [80, 205, 0.72], [100, 240, 0.72], [130, 330, 0.68], [150, 400, 0.6], [160, 450, 0.52], [200, 300, 0.58], [230, 260, 0.52],
  [190, 220, 0.63], [240, 200, 0.65], [180, 180, 0.75], [250, 160, 0.84], [340, 138, 0.88], [420, 118, 0.89], [500, 100, 0.86],
  [560, 88, 0.79], [650, 70, 0.74], [600, 115, 0.73], [540, 140, 0.69], [450, 150, 0.68], [350, 175, 0.64], [300, 205, 0.56],
  [450, 190, 0.54], [520, 185, 0.53], [350, 220, 0.46], [400, 220, 0.38], [450, 215, 0.4], [350, 260, 0.3], [300, 290, 0.25],
  [400, 260, 0.28], [300, 240, 0.42], [460, 250, 0.33], [520, 230, 0.42], [560, 200, 0.48], [600, 220, 0.52], [580, 250, 0.47],
  [280, 320, 0.3], [250, 300, 0.45], [340, 305, 0.32], [420, 285, 0.35], [500, 265, 0.42], [620, 180, 0.62], [650, 220, 0.63],
  [700, 240, 0.68], [680, 130, 0.84], [715, 145, 1.03], [735, 160, 1.04], [700, 118, 0.88], [765, 190, 0.88], [705, 180, 0.83],
  [660, 165, 0.73], [780, 220, 0.77], [810, 240, 0.74], [818, 285, 0.62], [825, 310, 0.48], [750, 250, 0.77], [600, 303, 0.81],
  [640, 294, 0.81], [680, 282, 0.8], [560, 313, 0.8], [520, 322, 0.79], [480, 334, 0.77], [450, 345, 0.75], [400, 352, 0.74],
  [350, 364, 0.72], [300, 372, 0.68], [250, 380, 0.65], [200, 400, 0.6], [300, 398, 0.6], [400, 378, 0.64], [500, 360, 0.64],
  [600, 337, 0.65], [700, 312, 0.64], [780, 298, 0.61], [220, 428, 0.5], [300, 415, 0.48], [400, 397, 0.46], [500, 378, 0.46],
  [600, 358, 0.46], [700, 337, 0.46], [780, 318, 0.48], [640, 262, 0.7], [560, 287, 0.68], [370, 332, 0.63], [200, 345, 0.61],
  [250, 350, 0.6], [470, 303, 0.63], [160, 250, 0.68], [150, 300, 0.66], [165, 370, 0.63],
];
function field(x, y) {
  let s = 0;
  let ws = 0;
  for (const [a, b, v] of samples) {
    /* distance is longer across the slab than along it */
    const u = (x - a) * 0.974 - (y - b) * 0.225;
    const t = (x - a) * 0.225 + (y - b) * 0.974;
    const w = Math.exp(-(u * u) / 1900 - (t * t) / 480) + 1e-7;
    s += w * v;
    ws += w;
  }
  return s / ws;
}
const strays = [
  859, 388, 889, 427, 848, 449, 877, 472, 844, 488, 865, 500, 907, 532, 895, 565, 871, 577, 922, 634, 865, 637, 907, 652, 887, 679,
  895, 688, 847, 745, 895, 745, 925, 740, 940, 736, 868, 787, 875, 781, 925, 790, 829, 799, 955, 835, 847, 865, 760, 820, 790, 820,
  772, 844, 742, 892, 703, 853, 682, 855, 631, 922, 580, 905, 523, 949, 516, 907, 529, 905, 457, 937, 415, 979, 442, 901, 460, 907,
  376, 946, 346, 913, 358, 904, 286, 955, 304, 1006, 268, 907, 280, 907, 271, 877, 253, 859, 256, 838, 238, 814, 256, 808, 241, 788,
  223, 772, 223, 748, 208, 730, 211, 709, 235, 703, 253, 715, 268, 733, 238, 730, 280, 769, 397, 883, 421, 883, 394, 856, 376, 847,
  361, 859, 433, 854, 451, 866, 643, 883, 628, 874, 557, 874, 841, 724, 805, 778, 817, 589, 848, 601, 835, 595, 811, 622, 838, 660,
  833, 515, 835, 527, 820, 550, 850, 430, 829, 352, 75, 237, 96, 325, 98, 300, 108, 350, 117, 385, 119, 412, 130, 433,
  136, 467, 139, 496, 154, 520, 155, 550, 157, 580, 170, 617, 181, 652, 196, 675, 196, 691,
];

function PointCloud() {
  const { under, slab, fringe } = useMemo(() => {
    let seed = 77031;
    const rnd = () => {
      seed = (seed * 1664525 + 1013904223) % 4294967296;
      return seed / 4294967296;
    };
    const edge = (x) => 460 - (x - 160) * 0.218;
    const cloudValue = (x, y) => {
      const d = Math.max(0, y - edge(x));
      const c = Math.hypot((x - 590) / 300, (y - 790) / 330);
      return Math.min(0.17, 0.005 + 0.14 * c) + 0.24 * Math.exp(-d / 42);
    };
    const under = [];
    for (let i = 0; i + 1 < strays.length; i += 2) under.push([strays[i], strays[i + 1], 15, 0.07 + (900 - strays[i + 1]) * 0.00016]);
    const pts = [];
    for (let i = 0; i < 7600; i++) {
      const y = 330 + rnd() * 545;
      const x = 120 + rnd() * 740;
      const left = 150 + (y - 450) * 0.28;
      const right = 832 + (y - 340) * 0.02;
      if (y < edge(x) - 12 || x < left || x > right) continue;
      const ax = 470 + (y - 420) * 0.32;
      const half = y < 560 ? 260 : 260 - (y - 560) * 0.42;
      const q = Math.abs(x - ax) / half;
      const top = Math.exp(-Math.max(0, y - edge(x)) / 30);
      const end = y > 760 ? Math.max(0, 1 - (y - 760) / 115) : 1;
      const core = y > 630 && Math.hypot((x - 600) / 125, (y - 750) / 120) < 1 ? 0.14 : 1;
      const p = (Math.exp(-q * q * 2.3) * 0.95 + 0.13 + top * 0.4) * end * core;
      if (rnd() > p) continue;
      pts.push([x, y, 15, cloudValue(x, y) + (rnd() - 0.5) * 0.04]);
    }
    /* curved ordered rows in the cold core */
    for (let r = 0; r < 15; r++)
      for (let k = 0; k < 17; k++) {
        const x = 478 + k * 18 - r * 2 + (r % 2) * 8;
        const y = 632 + r * 18 + k * 1.5 - Math.sin((k / 16) * 3.14) * 10;
        if (Math.hypot((x - 605) / 132, (y - 745) / 124) < 1 && rnd() < 0.88)
          pts.push([x + rnd() * 4, y + rnd() * 3, 15, 0.005 + cloudValue(x, y) * 0.45 + rnd() * 0.012]);
      }
    pts.sort((a, b) => a[1] * 0.01 - b[1] * 0.01 + (b[3] - a[3]) * 12);
    under.push(...pts);
    /* deeper points seen through the opening */
    for (let i = 0; i < 760; i++) {
      const a = rnd() * 6.283;
      const m = Math.sqrt(rnd());
      const u = Math.cos(a) * m * 225;
      const w = Math.sin(a) * m * 62;
      const x = 430 + u * 0.974 + w * 0.225;
      const y = 250 - u * 0.225 + w * 0.974;
      if (Math.hypot(x - 525, y - 225) < 42 && rnd() < 0.78) continue;
      under.push([x, y, 15, Math.max(0.14, field(x, y) - 0.1 + (rnd() - 0.5) * 0.12)]);
    }
    const slab = [];
    for (let y = 55; y < 470; y += 6)
      for (let x = 72; x < 832; x += 6) {
        if (y < 190 - (x - 75) * 0.24 || y > edge(x) + 8) continue;
        if (x > 655 && y < 50 + (x - 655) * 1.1) continue;
        if (x < 60 + (y - 200) * 0.32) continue;
        const v = field(x, y);
        const hx = (x - 430) * 0.974 - (y - 248) * 0.225;
        const hy = (x - 430) * 0.225 + (y - 248) * 0.974;
        const h = Math.hypot(hx / 235, hy / 62);
        const j = Math.max(0, Math.min(1, (1.15 - h) / 0.45));
        if (j > 0 && rnd() < j * 0.84) continue;
        const low = y > edge(x) - 26 ? (rnd() - 0.5) * 0.05 : 0;
        slab.push([x + j * (rnd() - 0.5) * 8, y + j * (rnd() - 0.5) * 8, 14, v + low + j * ((rnd() - 0.5) * 0.1 + 0.03)]);
      }
    const fringe = [];
    for (let i = 0; i < 330; i++) {
      const x = 152 + rnd() * 668;
      const t = rnd();
      fringe.push([x, edge(x) - 4 + t * 24, 14, 0.44 - t * 0.17 + (rnd() - 0.5) * 0.05]);
    }
    return { under, slab, fringe };
  }, []);
  const draw = (list) =>
    list.map(([x, y, s, v], i) => <rect key={i} x={x - s / 2} y={y - s / 2} width={s} height={s} rx="3" fill={color(v)} />);
  return (
    <svg width="340" height="350" viewBox="0 0 1020 1050" className="absolute left-[248px] top-[250px]">
      <clipPath id="slabClip">
        <path d="M80 199L640 64Q660 60 668 68L818 242Q822 250 824 270L828 318L160 464Q150 440 132 395L73 212Q72 202 80 199z" />
      </clipPath>
      {draw(under)}
      <g clipPath="url(#slabClip)">{draw(slab)}</g>
      {draw(fringe)}
    </svg>
  );
}

function Scene() {
  const ticks = [["5.6e+01", 731, 59], ["50", 800, 19], ["45", 858, 19], ["40", 916, 19], ["35", 973, 19], ["3.3e+01", 996, 59]];
  return (
    <div className="relative h-[811px] w-[811px] flex-none overflow-hidden border-2 border-[#0000ff] bg-[#52576e] font-['Lato'] text-white shadow-[inset_0_0_0_1px_#ffffff]">
      <div className="absolute -left-[2px] -top-[2px]"><PointCloud /></div>
      <svg width="100" height="90" viewBox="0 0 100 90" className="absolute left-[41px] top-[648px]">
        <path d="M60.500 57.500L52 17" stroke="#22c022" strokeWidth="1.200" />
        <path d="M60.500 57.500L18 68" stroke="#d62020" strokeWidth="1.200" />
        <path d="M60.500 57.500L68 72" stroke="#b5b030" strokeWidth="1.200" />
        <path d="M50 4.500L55.500 15.500H47.500z" fill="#00f000" />
        <path d="M6 70.500l12-6.500v7.500z" fill="#f00000" />
        <path d="M16 64.500l2-.500v7.500z" fill="#801010" />
        <circle cx="70" cy="75" r="4.800" fill="#8f8a00" />
        <path d="M66 71l5 0 4 5-6 3z" fill="#b4ae00" />
      </svg>
      <span className="absolute left-[95px] top-[647px] text-[17px] leading-[20px]">Z</span>
      <span className="absolute left-[60px] top-[700px] text-[16px] leading-[20px]">X</span>
      <span className="absolute left-[113px] top-[706px] text-[18px] leading-[20px]">Y</span>
      <div className="absolute left-[690px] top-[529px] h-[265px] w-[16px] bg-[linear-gradient(to_top,#3b4cc0,#6282ea_12.500%,#8db0fe_25%,#b8d0f9_37.500%,#dddddd_50%,#f5c4ad_62.500%,#f49a7b_75%,#de604d_87.500%,#b40426)]" />
      {ticks.map(([t, y, w]) => (
        <div key={t} className="absolute left-[703px] flex h-[20px] items-center" style={{ top: y - 212 }}>
          <span className="h-px w-[12px] bg-white" />
          <T w={w} className="ml-[5px] -mt-[4px] text-[17px] leading-[20px]">{t}</T>
        </div>
      ))}
      <div className="absolute left-[784px] top-[611px] flex h-[99px] w-[14px] items-center justify-center">
        <div className="-rotate-90 whitespace-nowrap text-[17.500px] leading-[20px] tracking-[0.250px]">Temperature</div>
      </div>
    </div>
  );
}

/* ---------- centre view ---------- */
const ViewBtns = () => (
  <div className="flex flex-none gap-[1px]">
    <Btn className="h-[25px] w-[26px]"><svg width="14" height="14" viewBox="0 0 14 14" fill="#cdd4ea" stroke="#9d9d9d"><path d="M.5 .5h13v13H.5zM7 0v14" /></svg></Btn>
    <Btn className="h-[25px] w-[26px]"><svg width="14" height="14" viewBox="0 0 14 14" fill="#cdd4ea" stroke="#9d9d9d"><path d="M.5 .5h13v13H.5zM0 7h14" /></svg></Btn>
    <Btn className="h-[25px] w-[26px]"><WinIcon s={18} /></Btn>
    <Btn className="h-[25px] w-[26px]"><CloseBox s={11} /></Btn>
  </div>
);
const WinIcon = ({ s = 16 }) => (
  <svg width={s} height={s} viewBox="0 0 18 18"><rect width="18" height="18" fill="#333538" /><rect x="1.500" y="5" width="15" height="11.500" fill="#f4f4f4" /></svg>
);

const viewTools = [
  "camUndo", "camRedo", "|", "capture", "|", "3D", "adjust", "|", "selAdd", "selSub", "selTog", "|", "selCells", "selPts", "frCells",
  "frPts", "polyCells", "polyPts", "blocks", "blockF", "hoverP", "hoverC", "hoverT", "askC", "askP", "plusGrey",
];

function RenderView() {
  return (
    <div className="w-[811px] flex-none">
      <div className="flex h-[27px] items-center pb-px">
        {viewTools.map((n, i) =>
          n === "|" ? <Sep key={i} /> : (
            <div key={i} className="flex w-[26px] flex-none items-center justify-center">
              {n === "3D" ? <T w={14} className="text-[11.500px] font-bold text-[#62625a]">3D</T> : <Ic n={n} s={n === "plusGrey" ? 15 : 17} />}
            </div>
          )
        )}
        <span className="w-[18px] flex-none pl-[7px] text-[#555]">»</span>
        <T w={82} className="border-b border-black text-[13px] font-bold leading-[16px]">RenderView1</T>
        <div className="flex-1" />
        <ViewBtns />
      </div>
      <Scene />
    </div>
  );
}

/* ---------- spreadsheet ---------- */
const data = `1|0|0|0|0|34.981
1|0|0|0.02|0.02|36.7518
1|0|0.01|0.02|0.0223607|40.4298
1|0|0.04|0.02|0.0447214|40.2252
1|0|0.05|0.02|0.0538516|36.537
1|0|0.05|0|0.05|34.7984
1|0.03|0|0|0.03|34.7265
1|0.03|0|0.02|0.0360555|36.4545
2|0.015|0|0.016|0.0219317|35.075
1|0.03|0.01|0.02|0.0374166|39.9279
1|0.03|0.04|0.02|0.0538516|38.6964
1|0.03|0.05|0.02|0.0616441|35.8931
1|0.03|0.05|0|0.0583095|34.437
3|0.015|0.05|0.016|0.0545985|34.7706
4|0.015|0.05|0.015|0.0543139|34.4362
5|0.015|0|0.015|0.0212132|34.7187
0|-1.0842e-19|0.01|0.0245|0.0264622|49.2439
0|-1.0842e-19|0.04|0.0245|0.0469068|49.0065
0|0.03|0.01|0.0245|0.0400031|48.8695
0|0.0005|0.0105|0.025|0.0271201|49.5281
0|0.0005|0.0395|0.025|0.0467493|49.2907
0|0.03|0.04|0.0245|0.0556799|45.3125
0|0.0295|0.0105|0.025|0.0400687|49.182
0|0.0295|0.0395|0.025|0.0552766|45.5314
1|0|0|0.005|0.005|35.1335
1|0|0|0.01|0.01|35.6873
1|0|0|0.015|0.015|36.4061
1|0|0.005|0.02|0.0206155|37.4975
1|0|0.012|0.02|0.0233238|41.8152`
  .split("\n")
  .map((l) => l.split("|"));
const grid = "grid grid-cols-[34px_41px_65px_75px_45px_67px_47px_66px_98px_70px] ";

function Table() {
  const head = [["Point ID", 39], ["Block Name", 59], ["FamilyIdNode", 68], ["Point ID", 40], null, ["Points_Magnitude", 90], ["Temperature", 64]];
  const hc = "flex h-[15px] items-center border-r border-[#c9c9c9] pt-[2px] ";
  return (
    <div className="flex h-[778px] w-[805px] flex-none overflow-hidden border border-[#b3b3b3] bg-white text-[11px] tracking-[-0.250px] text-[#111]">
      <div className="w-[791px] flex-none">
        <div className="h-[16px] bg-[#efefef]">
          <div className={grid + "h-[16px] w-[608px] border-b border-[#a9a9a9] bg-gradient-to-b from-[#fbfbfb] to-[#ececec]"}>
            <div />
            {head.map((h, i) =>
              h ? (
                <div key={i} className={hc + (i === 6 ? "border-r-0 pl-[3px]" : i ? "pl-[3px]" : "pl-px")}><T w={h[1]}>{h[0]}</T></div>
              ) : (
                <div key={i} className={hc + "col-span-3 justify-center"}><T w={32}>Points</T></div>
              )
            )}
          </div>
        </div>
        {data.map((r, i) => (
          <div key={i} className={grid + "h-[26px] w-[608px] " + (i % 2 ? "bg-[#f7f7f7]" : "bg-white")}>
            <div className="flex items-center border-b border-r border-[#ababab] bg-gradient-to-b from-[#fbfbfb] to-[#e9e9e9] pl-[1px] pt-[2px]">{i}</div>
            {[i, "dataset_1", r[0], i, ...r.slice(1, 4), r[4], r[5]].map((c, k) => (
              <div key={k} className="flex items-center whitespace-nowrap border-b border-r border-[#c4c4c4] pl-[3px]">
                {c === "dataset_1" ? <T w={49}>{c}</T> : c}
              </div>
            ))}
          </div>
        ))}
        <div className={grid + "h-[26px] w-[608px]"}>
          {Array.from({ length: 10 }, (_, k) => <div key={k} className="border-r border-[#c4c4c4] bg-[#f7f7f7]" />)}
        </div>
      </div>
      <div className="flex flex-1 flex-col border-l border-[#b9b9b9] bg-[#e2e2e2]">
        <SbBox dir="up" className="h-[12px] border-b" />
        <div className="h-[24px] border-b border-[#b9b9b9] bg-[#f8f8f8]" />
        <div className="flex-1" />
        <SbBox dir="down" className="h-[12px] border-t" />
      </div>
    </div>
  );
}

function SpreadSheet() {
  const b = "h-[21px] w-[22px]";
  return (
    <div className="flex flex-1 flex-col pl-[7px]">
      <div className="flex h-[26px] flex-none items-center justify-end pr-[2px]">
        <T w={111} className="mr-[12px] pt-[2px]">SpreadSheetView1</T>
        <ViewBtns />
      </div>
      <div className="mt-[3px] flex h-[26px] flex-none items-center">
        <T w={52} className="pt-px font-bold">Showing</T>
        <Combo className="ml-[5px] w-[137px] pl-[4px]"><T w={90}>TableToPoints1</T></Combo>
        <T w={61} className="ml-[3px] pt-px font-bold">Attribute:</T>
        <Combo className="ml-[1px] w-[98px] pl-[4px]"><T w={61}>Point Data</T></Combo>
        <T w={60} className="ml-[2px] pt-px font-bold">Precision:</T>
        <div className="ml-[1px] mr-px flex h-[21px] w-[38px] items-center rounded-[3px] border border-[#adadad] bg-white">
          <span className="flex h-full w-[25px] items-center justify-end border-r border-[#b9b9b9] pr-[6px] pt-px">6</span>
          <Spin />
        </div>
        <div className="flex gap-[1px]">
          {["prec", "selOnly", "gridY", "braces", "exportS"].map((n) => <Btn key={n} className={b}><Ic n={n} s={14} /></Btn>)}
        </div>
      </div>
      <Table />
    </div>
  );
}

export default function App() {
  return (
    <div className="flex h-[1042px] w-[1920px] flex-col overflow-hidden bg-[#eeeeee] font-['Noto_Sans',sans-serif] text-[12.500px] leading-[16px] text-black">
      <svg width="0" height="0" className="absolute">
        <defs>
          <linearGradient id="mapV" x1="0" y1="0" x2="0" y2="1"><stop offset="0" stopColor="#e8bd35" /><stop offset=".3" stopColor="#c3c24c" /><stop offset=".55" stopColor="#2ba69b" /><stop offset="1" stopColor="#3a4a9f" /></linearGradient>
          <linearGradient id="mapV2" x1="0" y1="0" x2="0" y2="1"><stop offset="0" stopColor="#3fc0b5" /><stop offset=".5" stopColor="#2b86c9" /><stop offset="1" stopColor="#31357f" /></linearGradient>
          <linearGradient id="mapDiag" x1="0" y1="1" x2="1" y2="0"><stop offset="0" stopColor="#2464a5" /><stop offset=".4" stopColor="#3ba79b" /><stop offset=".65" stopColor="#e4c23a" /><stop offset="1" stopColor="#e59a32" /></linearGradient>
        </defs>
      </svg>
      <div className="grid h-[30px] flex-none grid-cols-3 items-center bg-[#0d0e14]">
        <div />
        <div className="pt-px text-center text-[#c9c9cb]"><T w={122} className="font-semibold">ParaView 5.10.0-RC1</T></div>
        <div className="flex justify-end gap-[12px] pr-[7px]">
          <span className="h-[14px] w-[14px] rounded-full bg-gradient-to-r from-[#f8ea00] to-[#ffa92e]" />
          <span className="h-[14px] w-[14px] rounded-full bg-gradient-to-r from-[#c800e0] to-[#8200ff]" />
          <span className="h-[14px] w-[14px] rounded-full bg-gradient-to-r from-[#ff3d70] to-[#ff5a1f]" />
        </div>
      </div>
      <Toolbars />
      <div className="flex h-[866px] flex-none">
        <div className="flex w-[288px] flex-none flex-col">
          <PipelineBrowser />
          <Properties />
        </div>
        <div className="flex w-[1632px] flex-none flex-col pl-[2px]">
          <div className="flex h-[27px] flex-none items-end border-b border-[#b0b0b0]">
            <div className="-mb-px flex h-[25px] w-[116px] items-center rounded-t-[3px] border border-b-0 border-[#b0b0b0] bg-[#fafafa] pl-[9px]">
              <WinIcon s={15} /><T w={58} className="ml-[5px]">Layout #1</T><span className="ml-[6px]"><CloseBox s={11} /></span>
            </div>
            <div className="flex h-[23px] w-[29px] items-center justify-center rounded-t-[3px] border border-b-0 border-l-0 border-[#b9b9b9] bg-[#e3e3e3]">+</div>
          </div>
          <div className="flex h-[839px] flex-none border-b border-l border-[#b0b0b0] pl-px">
            <RenderView />
            <SpreadSheet />
          </div>
        </div>
      </div>
      <div className="flex h-[30px] flex-none items-center border-t border-[#e0e0e0]">
        <Btn off className="ml-[639px] h-[19px] w-[20px]"><svg width="8" height="8" viewBox="0 0 8 8" stroke="#8f8f8f" strokeWidth="3"><path d="M1 1l6 6M7 1L1 7" /></svg></Btn>
        <div className="ml-[2px] h-[24px] w-[616px] border border-[#e9e9e9] border-l-[#9d9d9d] border-t-[#9d9d9d]" />
        <div className="ml-[5px] flex h-[24px] w-[637px] items-center border border-[#a9a9a9] bg-white">
          <div className="h-full w-[168px] border-r border-[#98b890] bg-gradient-to-b from-[#c9ecc4] to-[#b0dba8]" />
          <T w={285} className="ml-[7px] pt-px">MSI-X299-SLI-PLUS-7A93: 8.2 GiB/31.1 GiB 26.4%</T>
        </div>
      </div>
    </div>
  );
}
